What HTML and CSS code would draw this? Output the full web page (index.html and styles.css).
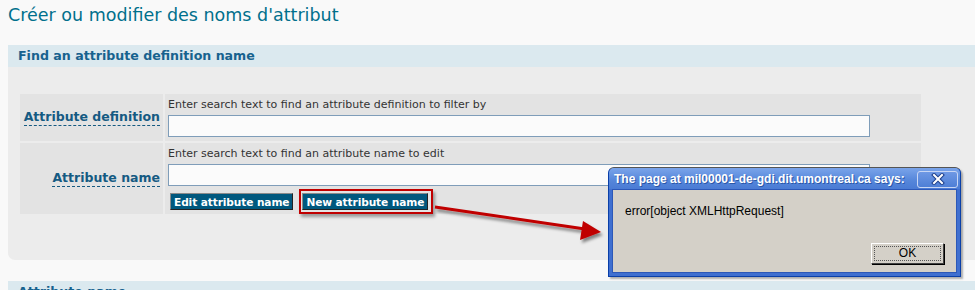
FILE: index.html
```html
<!DOCTYPE html>
<html lang="fr">
<head>
    <meta charset="UTF-8">
    <title>Créer ou modifier des noms d'attribut</title>
    <link rel="stylesheet" href="styles.css">
</head>
<body>
    <h1 class="page-title">Créer ou modifier des noms d'attribut</h1>

    <div class="section">
        <div class="section-head">Find an attribute definition name</div>
        <div class="panel">
            <div class="form-grid">
                <div class="label-cell"><span class="field-label">Attribute definition</span></div>
                <div class="input-cell">
                    <div class="hint">Enter search text to find an attribute definition to filter by</div>
                    <input type="text" class="search-box">
                </div>

                <div class="label-cell"><span class="field-label">Attribute name</span></div>
                <div class="input-cell">
                    <div class="hint">Enter search text to find an attribute name to edit</div>
                    <input type="text" class="search-box">
                    <div class="button-row">
                        <button class="btn">Edit attribute name</button>
                        <span class="highlight"><button class="btn">New attribute name</button></span>
                    </div>
                </div>
            </div>
        </div>
    </div>

    <div class="section">
        <div class="section-head">Attribute name</div>
    </div>

    <svg class="arrow" width="180" height="50" viewBox="0 0 180 50">
        <defs>
            <filter id="shadow" x="-10%" y="-30%" width="130%" height="180%">
                <feDropShadow dx="2" dy="3" stdDeviation="1.5" flood-color="#000" flood-opacity="0.45"/>
            </filter>
        </defs>
        <g filter="url(#shadow)">
            <line x1="4" y1="8" x2="154" y2="30" stroke="#c00000" stroke-width="3"/>
            <polygon points="170,33 152,22 149,41" fill="#c00000"/>
        </g>
    </svg>

    <div class="dialog">
        <div class="dialog-title">
            <span class="dialog-caption">The page at mil00001-de-gdi.dit.umontreal.ca says:</span>
            <span class="dialog-close">
                <svg width="16" height="12" viewBox="0 0 16 12">
                    <path d="M4 2 L12 10 M12 2 L4 10" stroke="#1c3f8c" stroke-width="4" stroke-linecap="square"/>
                    <path d="M4 2 L12 10 M12 2 L4 10" stroke="#ffffff" stroke-width="2" stroke-linecap="square"/>
                </svg>
            </span>
        </div>
        <div class="dialog-body">
            <p class="dialog-msg">error[object XMLHttpRequest]</p>
            <div class="dialog-actions">
                <button class="ok-btn"><span>OK</span></button>
            </div>
        </div>
    </div>
</body>
</html>
```

FILE: styles.css
```css
body {
    margin: 0;
    background-color: #f9f9f9;
    font-family: "DejaVu Sans", Verdana, sans-serif;
    position: relative;
    height: 290px;
    overflow: hidden;
}

.page-title {
    margin: 0;
    padding: 5px 8px 0;
    height: 40px;
    font-size: 17.5px;
    font-weight: normal;
    color: #00708c;
}

.section {
    margin-left: 8px;
}

.section-head {
    height: 22px;
    line-height: 22px;
    padding-left: 10px;
    background-color: #dbe9ef;
    color: #17628e;
    font-size: 12.6px;
    font-weight: bold;
}

.panel {
    background-color: #ececec;
    padding: 27px 12px 46px;
    border-radius: 0 0 0 7px;
    margin-bottom: 21px;
}

.form-grid {
    display: grid;
    grid-template-columns: 143px 756px;
    gap: 2px;
}

.label-cell {
    background-color: #e3e3e3;
    display: flex;
    align-items: center;
    justify-content: flex-end;
    padding-right: 3px;
}

.field-label {
    font-size: 12.5px;
    font-weight: bold;
    color: #155a82;
    border-bottom: 1px dashed #155a82;
    line-height: 16px;
    white-space: nowrap;
}

.input-cell {
    background-color: #e3e3e3;
    padding: 3px 3px 4px;
}

.hint {
    font-size: 11px;
    color: #333333;
    height: 15px;
    line-height: 15px;
    margin-bottom: 3px;
}

.search-box {
    display: block;
    box-sizing: border-box;
    width: 702px;
    height: 22px;
    margin: 0;
    border: 1px solid #7f9db9;
    background-color: #fbfbfb;
}

.button-row {
    display: flex;
    align-items: center;
    gap: 6px;
    height: 17px;
    margin-top: 7px;
    padding-left: 2px;
}

.btn {
    height: 17px;
    padding: 0 3px;
    background-color: #00587e;
    color: white;
    font-family: "DejaVu Sans", Verdana, sans-serif;
    font-size: 10.6px;
    font-weight: bold;
    letter-spacing: -0.1px;
    border: 1px solid #222;
    border-top-color: #8a8a8a;
    border-left-color: #8a8a8a;
    cursor: pointer;
}

.highlight {
    display: inline-flex;
    padding: 2px 3px 2px 1px;
    border: 2px solid #c00000;
    box-shadow: 2px 3px 3px rgba(0, 0, 0, 0.35);
}

.arrow {
    position: absolute;
    left: 431px;
    top: 199px;
}

.dialog {
    position: absolute;
    left: 608px;
    top: 167px;
    width: 353px;
    height: 110px;
    box-sizing: border-box;
    border: 1px solid #0a3fa8;
    border-top-color: #555;
    border-radius: 6px 6px 0 0;
    background-color: #3f6fd0;
    box-shadow: 2px 2px 2px rgba(0, 0, 0, 0.3);
    display: flex;
    flex-direction: column;
}

.dialog-title {
    height: 21px;
    display: flex;
    align-items: center;
    justify-content: space-between;
    padding: 0 2px 0 5px;
    border-radius: 5px 5px 0 0;
    background: linear-gradient(#7aa4ea, #5586da 60%, #4a7bd4);
    color: white;
}

.dialog-caption {
    font-family: "Liberation Sans", sans-serif;
    font-size: 12px;
    font-weight: bold;
    white-space: nowrap;
    text-shadow: 1px 1px 0 #2a56a8;
}

.dialog-close {
    width: 41px;
    height: 17px;
    margin-top: 1px;
    box-sizing: border-box;
    border: 1px solid #c8d6f4;
    border-radius: 3px;
    background: linear-gradient(#6e98e4, #4e7fd6);
    display: flex;
    align-items: center;
    justify-content: center;
}

.dialog-body {
    flex: 1;
    margin: 0 3px 3px;
    background-color: #d4d0c8;
    border: 1px solid #2c58b8;
    position: relative;
}

.dialog-msg {
    margin: 0;
    padding: 14px 0 0 12px;
    font-family: "Liberation Sans", Tahoma, sans-serif;
    font-size: 12px;
    color: #000;
}

.dialog-actions {
    position: absolute;
    right: 12px;
    bottom: 8px;
}

.ok-btn {
    width: 73px;
    height: 21px;
    padding: 2px;
    background-color: #d4d0c8;
    border: 1px solid #404040;
    border-top-color: #ffffff;
    border-left-color: #ffffff;
    box-shadow: 1px 1px 0 #000;
    font-family: "Liberation Sans", Tahoma, sans-serif;
    font-size: 12px;
}

.ok-btn span {
    display: block;
    height: 100%;
    box-sizing: border-box;
    border: 1px dotted #555;
    line-height: 13px;
}
```
